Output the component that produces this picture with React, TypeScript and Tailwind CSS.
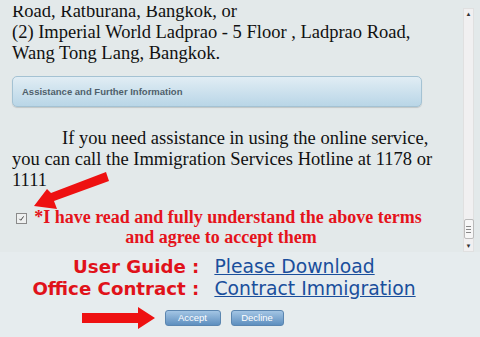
import React from 'react'

const serif = { fontFamily: '"Liberation Serif", "Times New Roman", serif' }
const sans = { fontFamily: '"DejaVu Sans", Verdana, sans-serif' }
const tahoma = { fontFamily: '"Liberation Sans", Tahoma, sans-serif' }

function Scrollbar() {
  return (
    <div className="w-[11px] mt-[2px] bg-[#f1f0f1] border border-[#e0e0e0] flex flex-col items-center justify-between">
      <div className="text-[6px] leading-none text-[#333] mt-[2px]">▲</div>
      <div className="flex flex-col items-center gap-[4px]">
        <div className="w-[10px] h-[20px] bg-[#f7f7f7] border border-[#bbb] rounded-[2px] flex flex-col items-center justify-center gap-[2px]">
          <div className="w-[5px] h-px bg-[#888]" />
          <div className="w-[5px] h-px bg-[#888]" />
          <div className="w-[5px] h-px bg-[#888]" />
        </div>
        <div className="text-[6px] leading-none text-[#333] mb-[2px]">▼</div>
      </div>
    </div>
  )
}

export default function App() {
  return (
    <div className="relative w-[480px] h-[337px] overflow-hidden bg-[#e3e9ea] flex flex-col pt-[6px]">
      <div className="h-[246px] flex overflow-hidden">
        <div className="flex-1 pl-[12px] text-[#111] text-[18.5px] leading-[21px] whitespace-nowrap" style={serif}>
          <div className="-mt-[5px]">Road, Ratburana, Bangkok, or</div>
          <div>(2) Imperial World Ladprao - 5 Floor , Ladprao Road,</div>
          <div>Wang Tong Lang, Bangkok.</div>

          <div className="mt-[12px] h-[31px] w-[410px] rounded-[5px] border border-[#a4c2d3] bg-gradient-to-b from-[#e1edf4] to-[#b9d6e7] flex items-center pl-[9px] shadow-[0_1px_1px_rgba(0,0,0,0.15)]">
            <span className="text-[9.5px] font-bold text-[#4f5f6b] leading-none" style={tahoma}>
              Assistance and Further Information
            </span>
          </div>

          <div className="mt-[21px]">
            <div className="pl-[50px]">If you need assistance in using the online service,</div>
            <div>you can call the Immigration Services Hotline at 1178 or</div>
            <div>1111</div>
          </div>

          <div className="mt-[16px] flex items-start">
            <div className="mt-[6px] ml-[4px] w-[11px] h-[11px] border border-[#8a8a8a] bg-[#eef0f0] flex items-center justify-center">
              <svg viewBox="0 0 10 10" className="w-[7px] h-[7px]">
                <path d="M2 5.5 L4 7.5 L8 2" stroke="#333" strokeWidth="1.3" fill="none" />
              </svg>
            </div>
            <div className="ml-[5px] w-[392px] text-center text-[#e5131b] font-bold text-[18px] leading-[20px]">
              <div>*I have read and fully understand the above terms</div>
              <div className="pr-[14px]">and agree to accept them</div>
            </div>
          </div>
        </div>
        <Scrollbar />
        <div className="w-[6px]" />
      </div>

      <div className="flex-1 bg-[#e6ecee] flex flex-col items-center pt-[4px] pr-[32px]" style={sans}>
        <div className="grid grid-cols-[auto_auto] gap-x-[15px] leading-[22px] whitespace-nowrap">
          <div className="text-right font-bold text-[#e0121a] text-[18.2px]">User Guide :</div>
          <div className="text-[#1a4f9c] underline text-[18.8px]">Please Download</div>
          <div className="text-right font-bold text-[#e0121a] text-[18.2px]">Office Contract :</div>
          <div className="text-[#1a4f9c] underline text-[18.8px]">Contract Immigration</div>
        </div>
        <div className="mt-[10px] flex gap-[10px]">
          <button className="w-[56px] h-[16px] rounded-[3px] bg-gradient-to-b from-[#a3c5e4] to-[#5e8fbf] border border-[#5b86b0] text-white text-[9.5px] leading-none" style={tahoma}>Accept</button>
          <button className="w-[53px] h-[16px] rounded-[3px] bg-gradient-to-b from-[#a3c5e4] to-[#5e8fbf] border border-[#5b86b0] text-white text-[9.5px] leading-none" style={tahoma}>Decline</button>
        </div>
      </div>

      {/* red arrows */}
      <svg className="absolute left-0 top-0 pointer-events-none" width="480" height="337" viewBox="0 0 480 337">
        <polygon points="106,172 109,181 54,201 57,209 34,206 47,189 51,193" fill="#ee1111" />
        <polygon points="82,313 138,313 138,307 155,318 138,329 138,323 82,323" fill="#ee1111" />
      </svg>
    </div>
  )
}
